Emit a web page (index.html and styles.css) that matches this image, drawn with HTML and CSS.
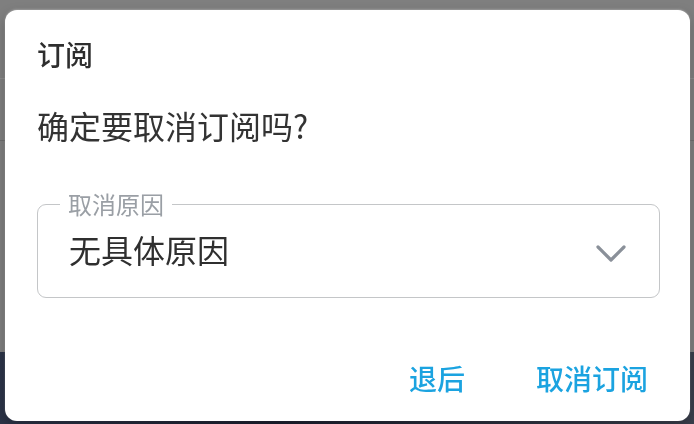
FILE: index.html
```html
<!DOCTYPE html>
<html lang="zh-CN">
<head>
<meta charset="utf-8">
<title>订阅</title>
<link rel="stylesheet" href="styles.css">
</head>
<body>
<div class="page">
  <div class="page-top"></div>
  <div class="page-rule"></div>
  <div class="page-mid"></div>
  <div class="page-rule dark"></div>
  <div class="page-body"></div>
  <div class="page-photo"></div>
</div>
<div class="dialog" role="dialog">
  <h2 class="dialog-title">订阅</h2>
  <p class="dialog-message">确定要取消订阅吗?</p>
  <div class="field">
    <span class="field-label">取消原因</span>
    <div class="field-value">无具体原因</div>
    <svg class="field-chevron" width="30" height="18" viewBox="0 0 30 18" aria-hidden="true">
      <path d="M2 2 L15 15 L28 2" fill="none" stroke="#8a9099" stroke-width="3.2" stroke-linecap="round" stroke-linejoin="round"/>
    </svg>
  </div>
  <div class="dialog-actions">
    <button class="btn">退后</button>
    <button class="btn">取消订阅</button>
  </div>
</div>
</body>
</html>
```

FILE: styles.css
```css
html, body {
  margin: 0;
  padding: 0;
  height: 100%;
}
body {
  background: #7f7f7f;
  font-family: "Noto Sans CJK SC", "Noto Sans", sans-serif;
  overflow: hidden;
}
.page {
  display: flex;
  flex-direction: column;
  height: 100%;
}
.page-top { height: 78px; background: #7f7f7f; }
.page-rule { height: 1px; background: #8c8c8c; }
.page-rule.dark { background: #6e6e6e; }
.page-mid { height: 61px; background: #7f7f7f; }
.page-body { flex: 1; background: #7f7f7f; }
.page-photo { height: 72px; background: linear-gradient(90deg, #2c3448, #1c2030 40%, #3a3f4c); }

.dialog {
  position: fixed;
  left: 5px;
  top: 10px;
  width: 685px;
  height: 411px;
  box-sizing: border-box;
  background: #ffffff;
  border-radius: 12px;
  box-shadow: 0 -1px 2px rgba(255,255,255,0.25), 0 4px 12px rgba(0,0,0,0.25);
  padding: 25px 0 0 32px;
  display: flex;
  flex-direction: column;
}
.dialog-title {
  margin: 0;
  font-size: 28px;
  line-height: 38px;
  font-weight: 500;
  color: #2e2e2e;
}
.dialog-message {
  margin: 31px 0 0;
  font-size: 32px;
  line-height: 42px;
  font-weight: 400;
  color: #333333;
}
.field {
  position: relative;
  margin-top: 58px;
  width: 623px;
  height: 94px;
  box-sizing: border-box;
  border: 1.5px solid #c4c6c8;
  border-radius: 9px;
  display: flex;
  align-items: center;
  padding: 0 32px 5px 31px;
}
.field-label {
  position: absolute;
  left: 22px;
  top: -13px;
  padding: 0 8px;
  background: #ffffff;
  font-size: 24px;
  line-height: 24px;
  color: #9a9fa5;
}
.field-value {
  flex: 1;
  font-size: 32px;
  line-height: 42px;
  color: #2f2f2f;
}
.field-chevron {
  display: block;
  margin-right: 1px;
  margin-top: 10px;
}
.dialog-actions {
  display: flex;
  justify-content: flex-end;
  gap: 71px;
  margin-top: 61px;
  padding-right: 42px;
}
.btn {
  border: 0;
  background: none;
  padding: 0;
  font-family: inherit;
  font-size: 28px;
  line-height: 38px;
  font-weight: 500;
  color: #1ba3e0;
  cursor: pointer;
}
```
